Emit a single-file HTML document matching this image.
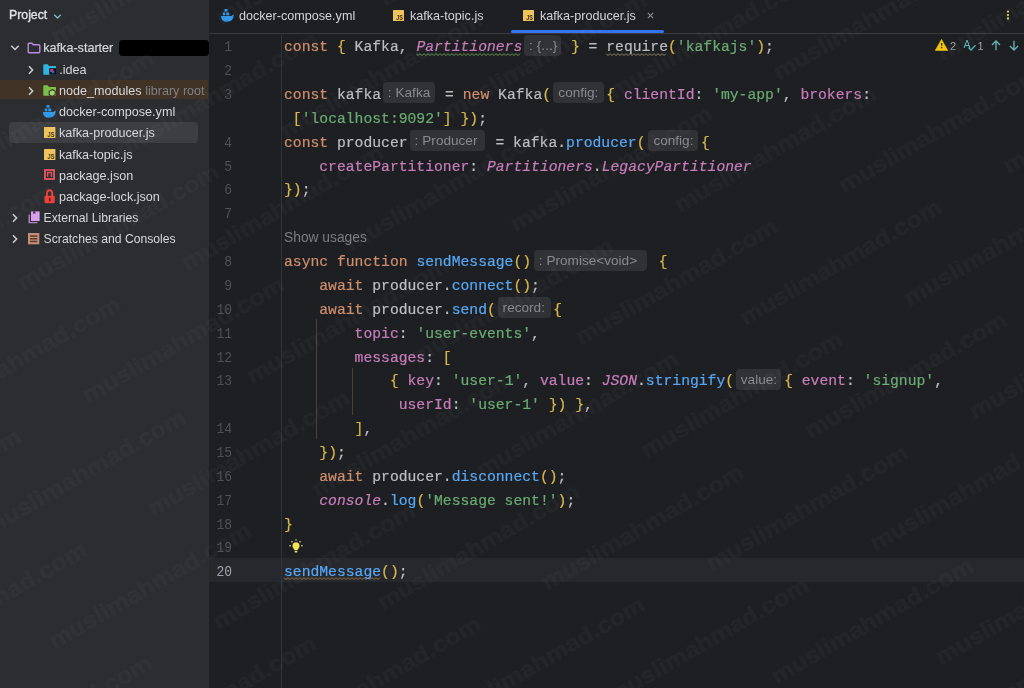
<!DOCTYPE html>
<html><head><meta charset="utf-8">
<style>
*{margin:0;padding:0;box-sizing:border-box}
html,body{width:1024px;height:688px;overflow:hidden;background:#1e1f22}
body{position:relative;font-family:"Liberation Sans",sans-serif}
#side{position:absolute;left:0;top:0;width:209px;height:688px;background:#2b2d30}
#tabs{position:absolute;left:209px;top:0;width:815px;height:34px;background:#1e1f22;border-bottom:1px solid #393b40}
.tab{position:absolute;top:0;height:32px;font-size:12.6px;color:#d2d4d9;line-height:32px;white-space:nowrap}
.uline{position:absolute;left:302px;top:30px;width:153px;height:3px;border-radius:2px;background:#3574f0}
.row{position:absolute;left:0;width:209px;height:21px;font-size:12.6px;color:#d6d8dc;line-height:21px;white-space:nowrap}
.row .t{position:absolute;top:0}
.row svg{position:absolute}
#gutline{position:absolute;left:281px;top:33px;width:1px;height:655px;background:#313438}
#curline{position:absolute;left:209px;width:815px;height:24px;background:#26282e}
.ln{position:absolute;left:209px;width:23px;text-align:right;font-family:"Liberation Mono",monospace;font-size:14.71px;color:#4e5157;height:24px;line-height:24px;padding-top:2px}
.ln.cur{color:#a1a3ab}
.cl{position:absolute;left:284px;-webkit-text-stroke:0.2px currentColor;font-family:"Liberation Mono",monospace;font-size:14.71px;color:#bcbec4;height:24px;line-height:24px;white-space:pre;padding-top:2px}
.k{color:#cf8e6d}.s{color:#6aab73}.f{color:#56a8f5}.p{color:#c77dbb}.g{color:#c77dbb;font-style:italic}.b{color:#d6b74b}
.ih{-webkit-text-stroke:0;display:inline-block;vertical-align:top;height:21px;margin-top:-0.5px;line-height:22.6px;background:#303236;border-radius:4px;color:#868a91;font-family:"Liberation Sans",sans-serif;font-size:13.6px;text-align:left;padding-left:5px;overflow:hidden}
.col{margin-right:4px}
.showu{position:absolute;left:284px;height:24px;line-height:24px;padding-top:1.7px;font-size:13.8px;color:#7a7d84;white-space:nowrap}
.sb{position:absolute;color:#dfe1e5;-webkit-text-stroke:0.35px #dfe1e5;line-height:20px}
.sb2{-webkit-text-stroke:0.2px #d6d8dc}
#wm{position:absolute;left:0;top:0;pointer-events:none}
#root{position:absolute;left:0;top:0;width:1024px;height:688px;will-change:transform}
.ln{transform:scaleX(0.88);transform-origin:right center}

</style></head><body>
<div id="root">
<div id="curline" style="top:558.34px"></div>
<div id="side">
  <div class="sb" style="left:9px;top:5.3px;font-size:12.3px">Project</div>
  <svg style="position:absolute;left:53px;top:12.5px" width="9" height="7" viewBox="0 0 9 7"><path d="M1.2 1.8 L4.5 5 L7.8 1.8" fill="none" stroke="#7fb3c8" stroke-width="1.4"/></svg>
  <div style="position:absolute;left:0;top:79.8px;width:208px;height:19.6px;background:#413325"></div>
  <div style="position:absolute;left:9px;top:122.4px;width:189px;height:20.3px;border-radius:4px;background:#3c3e42"></div>
  <!-- chevrons -->
  <svg style="position:absolute;left:10px;top:44px" width="10" height="8" viewBox="0 0 10 8"><path d="M1.3 1.8 L5 5.5 L8.7 1.8" fill="none" stroke="#ced0d6" stroke-width="1.5"/></svg>
  <svg style="position:absolute;left:27px;top:64.5px" width="8" height="10" viewBox="0 0 8 10"><path d="M2 1.3 L5.6 5 L2 8.7" fill="none" stroke="#ced0d6" stroke-width="1.5"/></svg>
  <svg style="position:absolute;left:27px;top:85.5px" width="8" height="10" viewBox="0 0 8 10"><path d="M2 1.3 L5.6 5 L2 8.7" fill="none" stroke="#ced0d6" stroke-width="1.5"/></svg>
  <svg style="position:absolute;left:11px;top:212.5px" width="8" height="10" viewBox="0 0 8 10"><path d="M2 1.3 L5.6 5 L2 8.7" fill="none" stroke="#ced0d6" stroke-width="1.5"/></svg>
  <svg style="position:absolute;left:11px;top:233.5px" width="8" height="10" viewBox="0 0 8 10"><path d="M2 1.3 L5.6 5 L2 8.7" fill="none" stroke="#ced0d6" stroke-width="1.5"/></svg>
  <!-- project folder purple outline -->
  <svg style="position:absolute;left:27px;top:42px" width="14" height="12" viewBox="0 0 14 12"><path d="M1.2 2.2 Q1.2 1.2 2.2 1.2 L5 1.2 L6.3 2.8 L11.8 2.8 Q12.8 2.8 12.8 3.8 L12.8 9.8 Q12.8 10.8 11.8 10.8 L2.2 10.8 Q1.2 10.8 1.2 9.8 Z" fill="none" stroke="#b98ee0" stroke-width="1.4"/></svg>
  <!-- .idea folder cyan -->
  <svg style="position:absolute;left:43px;top:63.5px" width="14" height="12" viewBox="0 0 14 12"><path d="M0.3 1.2 Q0.3 0.3 1.2 0.3 L4.6 0.3 L6 2 L12.3 2 Q13 2 13 2.8 L13 10 Q13 10.7 12.3 10.7 L1 10.7 Q0.3 10.7 0.3 10 Z" fill="#2fb5e0"/><rect x="6.3" y="4.2" width="6.7" height="6.5" fill="#0d0f14"/><rect x="7.3" y="5" width="3" height="3" fill="#d04080"/><rect x="9" y="6.8" width="2.5" height="2.5" fill="#3060c0"/></svg>
  <!-- node_modules green folder -->
  <svg style="position:absolute;left:43px;top:85px" width="14" height="13" viewBox="0 0 14 13"><path d="M0.3 1.2 Q0.3 0.3 1.2 0.3 L4.6 0.3 L6 2 L12.3 2 Q13 2 13 2.8 L13 10 Q13 10.7 12.3 10.7 L1 10.7 Q0.3 10.7 0.3 10 Z" fill="#7cbf4a"/><path d="M9.2 4.6 L12.2 6.3 L12.2 9.8 L9.2 11.5 L6.2 9.8 L6.2 6.3 Z" fill="#9fd672" stroke="#3a3124" stroke-width="1.1"/></svg>
  <!-- docker -->
  <svg style="position:absolute;left:43px;top:104.7px" width="14" height="13" viewBox="0 0 14 13"><rect x="3.5" y="0" width="3" height="2.6" fill="#2e98e8"/><rect x="1.8" y="3.5" width="2.5" height="2.8" fill="#2e98e8"/><rect x="5.3" y="3.5" width="2.9" height="2.8" fill="#2e98e8"/><path d="M0 7 L10.2 7 L12.9 5.2 Q12.4 12.8 6 12.8 Q0.3 12.8 0 7 Z" fill="#2e98e8"/></svg>
  <!-- js icons -->
  <svg style="position:absolute;left:43.8px;top:127px" width="12" height="11.5" viewBox="0 0 12 11.5"><rect x="0" y="0" width="11.4" height="11" rx="0.6" fill="#eec35e"/><text x="3.6" y="10" font-family="Liberation Sans" font-weight="bold" font-size="7.4" textLength="6.9" lengthAdjust="spacingAndGlyphs" fill="#3b2e12">JS</text></svg>
  <svg style="position:absolute;left:43.8px;top:148.5px" width="12" height="11.5" viewBox="0 0 12 11.5"><rect x="0" y="0" width="11.4" height="11" rx="0.6" fill="#eec35e"/><text x="3.6" y="10" font-family="Liberation Sans" font-weight="bold" font-size="7.4" textLength="6.9" lengthAdjust="spacingAndGlyphs" fill="#3b2e12">JS</text></svg>
  <!-- package.json npm -->
  <svg style="position:absolute;left:44px;top:169.3px" width="12" height="12" viewBox="0 0 12 12"><rect x="1" y="1" width="9" height="9" fill="none" stroke="#e0555f" stroke-width="1.9"/><path d="M3.6 7.8 L3.6 3.6 L7.4 3.6 L7.4 7.8" fill="none" stroke="#e0555f" stroke-width="1.5"/></svg>
  <!-- padlock -->
  <svg style="position:absolute;left:43.5px;top:188.7px" width="12" height="15" viewBox="0 0 12 15"><path d="M3 7 L3 4.6 Q3 1.2 5.6 1.2 Q8.2 1.2 8.2 4.6 L8.2 7" fill="none" stroke="#e8403a" stroke-width="1.9"/><rect x="0.5" y="6.8" width="10.3" height="7.5" rx="1.3" fill="#e8403a"/><rect x="5" y="8.8" width="1.4" height="3.4" fill="#5a1515"/></svg>
  <!-- external libraries -->
  <svg style="position:absolute;left:27.5px;top:211px" width="13" height="13" viewBox="0 0 13 13"><path d="M1.2 3.4 L1.2 11.6 L9.4 11.6" fill="none" stroke="#b982cf" stroke-width="1.4"/><rect x="3" y="0.4" width="8.6" height="9.6" fill="#d8a0ea"/><path d="M5.2 0.4 L5.2 3 L6.3 2.2 L7.4 3 L7.4 0.4 Z" fill="#3c2850"/></svg>
  <!-- scratches -->
  <svg style="position:absolute;left:28px;top:232.7px" width="12" height="12" viewBox="0 0 12 12"><rect x="0" y="0" width="11.3" height="11.3" fill="#c48f78"/><rect x="2" y="2.3" width="7.3" height="1.5" fill="#5e3a2c"/><rect x="2" y="5" width="7.3" height="1.5" fill="#5e3a2c"/><rect x="2" y="7.7" width="7.3" height="1.5" fill="#5e3a2c"/></svg>
  <div class="row" style="top:37.5px"><span class="t sb2" style="left:43.3px">kafka-starter</span></div>
  <div style="position:absolute;left:118.5px;top:40px;width:90.5px;height:15.8px;border-radius:4px;background:#000"></div>
  <div class="row" style="top:59.5px"><span class="t" style="left:59.3px">.idea</span></div>
  <div class="row" style="top:80.5px"><span class="t" style="left:59px">node_modules <span style="color:#7d8087">library root</span></span></div>
  <div class="row" style="top:102px"><span class="t" style="left:59px">docker-compose.yml</span></div>
  <div class="row" style="top:123px"><span class="t" style="left:59px">kafka-producer.js</span></div>
  <div class="row" style="top:144.5px"><span class="t" style="left:59px">kafka-topic.js</span></div>
  <div class="row" style="top:165.5px"><span class="t" style="left:59px">package.json</span></div>
  <div class="row" style="top:187px"><span class="t" style="left:59px">package-lock.json</span></div>
  <div class="row" style="top:208px"><span class="t" style="left:43.6px;font-size:12.2px">External Libraries</span></div>
  <div class="row" style="top:229px"><span class="t" style="left:43.6px;font-size:12.2px">Scratches and Consoles</span></div>
</div>
<div id="tabs">
  <svg style="position:absolute;left:11.6px;top:8.5px" width="14" height="13" viewBox="0 0 14 13"><rect x="3.5" y="0" width="3" height="2.6" fill="#2e98e8"/><rect x="1.8" y="3.5" width="2.5" height="2.8" fill="#2e98e8"/><rect x="5.3" y="3.5" width="2.9" height="2.8" fill="#2e98e8"/><path d="M0 7 L10.2 7 L12.9 5.2 Q12.4 12.8 6 12.8 Q0.3 12.8 0 7 Z" fill="#2e98e8"/></svg>
  <div class="tab" style="left:30px">docker-compose.yml</div>
  <svg style="position:absolute;left:184px;top:9.7px" width="12" height="11.5" viewBox="0 0 12 11.5"><rect x="0" y="0" width="11" height="11" rx="0.6" fill="#eec35e"/><text x="3.3" y="10" font-family="Liberation Sans" font-weight="bold" font-size="7.2" textLength="6.7" lengthAdjust="spacingAndGlyphs" fill="#3b2e12">JS</text></svg>
  <div class="tab" style="left:201px">kafka-topic.js</div>
  <svg style="position:absolute;left:313.8px;top:9.7px" width="12" height="11.5" viewBox="0 0 12 11.5"><rect x="0" y="0" width="11" height="11" rx="0.6" fill="#eec35e"/><text x="3.3" y="10" font-family="Liberation Sans" font-weight="bold" font-size="7.2" textLength="6.7" lengthAdjust="spacingAndGlyphs" fill="#3b2e12">JS</text></svg>
  <div class="tab" style="left:331px">kafka-producer.js</div>
  <svg style="position:absolute;left:437.5px;top:11.5px" width="7" height="7" viewBox="0 0 7 7"><path d="M0.8 0.8 L6.2 6.2 M6.2 0.8 L0.8 6.2" stroke="#8c8f96" stroke-width="1.1"/></svg>
  <div class="uline"></div>
  <svg style="position:absolute;left:796px;top:9px" width="6" height="12" viewBox="0 0 6 12"><circle cx="3" cy="2.55" r="1.15" fill="#d6cf5a"/><circle cx="3" cy="6.05" r="1.15" fill="#d6cf5a"/><circle cx="3" cy="9.5" r="1.15" fill="#d6cf5a"/></svg>
</div>
<!-- problems widget -->
<svg style="position:absolute;left:935px;top:39px" width="14" height="12" viewBox="0 0 14 12"><path d="M6.5 0.4 L12.8 11.6 L0.2 11.6 Z" fill="#f2c40f" stroke="#f2c40f" stroke-width="0.6" stroke-linejoin="round"/><rect x="5.9" y="4" width="1.4" height="2.6" fill="#3a3000"/><rect x="5.9" y="7.8" width="1.4" height="1.5" fill="#3a3000"/></svg>
<div style="position:absolute;left:950px;top:38px;font-size:11px;line-height:16px;color:#9da0a8">2</div>
<svg style="position:absolute;left:963px;top:39px" width="14" height="13" viewBox="0 0 14 13"><text x="0.5" y="8.6" font-family="Liberation Sans" font-size="10.5" fill="#5bb5bb">A</text><path d="M5.5 8.4 L8 11 L12.5 6.3" fill="none" stroke="#4fb0b0" stroke-width="1.4"/></svg>
<div style="position:absolute;left:977.5px;top:38px;font-size:11px;line-height:16px;color:#9da0a8">1</div>
<svg style="position:absolute;left:990.5px;top:39.5px" width="10" height="11" viewBox="0 0 10 11"><path d="M5 10.3 L5 1.2 M1 5 L5 1 L9 5" fill="none" stroke="#6ab5b2" stroke-width="1.3"/></svg>
<svg style="position:absolute;left:1009px;top:39.5px" width="10" height="11" viewBox="0 0 10 11"><path d="M5 0.7 L5 9.8 M1 6 L5 10 L9 6" fill="none" stroke="#6ab5b2" stroke-width="1.3"/></svg>
<!-- indent guides -->
<div style="position:absolute;left:316px;top:319px;width:1px;height:120px;background:#4a4330"></div>
<div style="position:absolute;left:352px;top:368px;width:1px;height:47px;background:#4a4330"></div>
<!-- bulb -->
<svg style="position:absolute;left:288.5px;top:538.5px" width="15" height="15" viewBox="0 0 15 15"><circle cx="7" cy="6.8" r="3.5" fill="#f4e258"/><path d="M4.6 8.8 L9.4 8.8 L8.6 11.3 L5.4 11.3 Z" fill="#f4e258"/><rect x="5.6" y="12" width="2.8" height="1.5" rx="0.5" fill="#e8dc8a"/><g fill="#d2cc9a"><rect x="6.3" y="0.3" width="1.4" height="1.4"/><rect x="2.3" y="2" width="1.4" height="1.4"/><rect x="10.3" y="2" width="1.4" height="1.4"/><rect x="0.4" y="6" width="1.4" height="1.4"/><rect x="12.2" y="6" width="1.4" height="1.4"/></g></svg>
<!-- wavy -->
<svg style="position:absolute;left:416px;top:52.6px" width="107" height="4"><polyline points="0.0,0.6 2.0,2.6 4.0,0.6 6.0,2.6 8.0,0.6 10.0,2.6 12.0,0.6 14.0,2.6 16.0,0.6 18.0,2.6 20.0,0.6 22.0,2.6 24.0,0.6 26.0,2.6 28.0,0.6 30.0,2.6 32.0,0.6 34.0,2.6 36.0,0.6 38.0,2.6 40.0,0.6 42.0,2.6 44.0,0.6 46.0,2.6 48.0,0.6 50.0,2.6 52.0,0.6 54.0,2.6 56.0,0.6 58.0,2.6 60.0,0.6 62.0,2.6 64.0,0.6 66.0,2.6 68.0,0.6 70.0,2.6 72.0,0.6 74.0,2.6 76.0,0.6 78.0,2.6 80.0,0.6 82.0,2.6 84.0,0.6 86.0,2.6 88.0,0.6 90.0,2.6 92.0,0.6 94.0,2.6 96.0,0.6 98.0,2.6 100.0,0.6 102.0,2.6 104.0,0.6" fill="none" stroke="#6a9a52" stroke-width="1"/></svg>
<svg style="position:absolute;left:606px;top:52.6px" width="63" height="4"><polyline points="0.0,0.6 2.0,2.6 4.0,0.6 6.0,2.6 8.0,0.6 10.0,2.6 12.0,0.6 14.0,2.6 16.0,0.6 18.0,2.6 20.0,0.6 22.0,2.6 24.0,0.6 26.0,2.6 28.0,0.6 30.0,2.6 32.0,0.6 34.0,2.6 36.0,0.6 38.0,2.6 40.0,0.6 42.0,2.6 44.0,0.6 46.0,2.6 48.0,0.6 50.0,2.6 52.0,0.6 54.0,2.6 56.0,0.6 58.0,2.6 60.0,0.6" fill="none" stroke="#948462" stroke-width="1"/></svg>
<svg style="position:absolute;left:284px;top:576.8px" width="98" height="4"><polyline points="0.0,0.6 2.0,2.6 4.0,0.6 6.0,2.6 8.0,0.6 10.0,2.6 12.0,0.6 14.0,2.6 16.0,0.6 18.0,2.6 20.0,0.6 22.0,2.6 24.0,0.6 26.0,2.6 28.0,0.6 30.0,2.6 32.0,0.6 34.0,2.6 36.0,0.6 38.0,2.6 40.0,0.6 42.0,2.6 44.0,0.6 46.0,2.6 48.0,0.6 50.0,2.6 52.0,0.6 54.0,2.6 56.0,0.6 58.0,2.6 60.0,0.6 62.0,2.6 64.0,0.6 66.0,2.6 68.0,0.6 70.0,2.6 72.0,0.6 74.0,2.6 76.0,0.6 78.0,2.6 80.0,0.6 82.0,2.6 84.0,0.6 86.0,2.6 88.0,0.6 90.0,2.6 92.0,0.6 94.0,2.6 96.0,0.6" fill="none" stroke="#977348" stroke-width="1"/></svg>

<div id="gutline"></div>
<div class="ln" style="top:33.20px">1</div><div class="ln" style="top:57.07px">2</div><div class="ln" style="top:80.94px">3</div><div class="ln" style="top:128.68px">4</div><div class="ln" style="top:152.55px">5</div><div class="ln" style="top:176.42px">6</div><div class="ln" style="top:200.29px">7</div><div class="ln" style="top:248.03px">8</div><div class="ln" style="top:271.90px">9</div><div class="ln" style="top:295.77px">10</div><div class="ln" style="top:319.64px">11</div><div class="ln" style="top:343.51px">12</div><div class="ln" style="top:367.38px">13</div><div class="ln" style="top:415.12px">14</div><div class="ln" style="top:438.99px">15</div><div class="ln" style="top:462.86px">16</div><div class="ln" style="top:486.73px">17</div><div class="ln" style="top:510.60px">18</div><div class="ln" style="top:534.47px">19</div><div class="ln cur" style="top:558.34px">20</div>
<div id="code">
<div class="cl" style="top:33.20px"><span class="k">const</span> <span class="b">{</span> Kafka, <span class="g">Partitioners</span><span class="ih" style="width:36.50px;margin-left:1.77px;margin-right:1.60px"><span class="col">:</span>{...}</span> <span class="b">}</span> = require<span class="b">(</span><span class="s">'kafkajs'</span><span class="b">)</span>;</div>
<div class="cl" style="top:80.94px"><span class="k">const</span> kafka<span class="ih" style="width:51.80px;margin-left:1.64px;margin-right:1.80px"><span class="col">:</span>Kafka</span> = <span class="k">new</span> Kafka<span class="b">(</span><span class="ih" style="width:50.70px;margin-left:2.30px;margin-right:2.20px">config:</span><span class="b">{</span> <span class="p">clientId</span>: <span class="s">'my-app'</span>, <span class="p">brokers</span>:</div>
<div class="cl" style="top:104.81px"> <span class="b">[</span><span class="s">'localhost:9092'</span><span class="b">]</span> <span class="b">}</span><span class="b">)</span>;</div>
<div class="cl" style="top:128.68px"><span class="k">const</span> producer<span class="ih" style="width:75.20px;margin-left:1.97px;margin-right:1.95px"><span class="col">:</span>Producer</span> = kafka.<span class="f">producer</span><span class="b">(</span><span class="ih" style="width:49.80px;margin-left:2.93px;margin-right:2.90px">config:</span><span class="b">{</span></div>
<div class="cl" style="top:152.55px">    <span class="p">createPartitioner</span>: <span class="g">Partitioners</span>.<span class="g">LegacyPartitioner</span></div>
<div class="cl" style="top:176.42px"><span class="b">}</span><span class="b">)</span>;</div>
<div class="cl" style="top:248.03px"><span class="k">async</span> <span class="k">function</span> <span class="f">sendMessage</span><span class="b">()</span><span class="ih" style="width:112.90px;margin-left:2.54px;margin-right:3.30px"><span class="col">:</span>Promise&lt;void&gt;</span> <span class="b">{</span></div>
<div class="cl" style="top:271.90px">    <span class="k">await</span> producer.<span class="f">connect</span><span class="b">()</span>;</div>
<div class="cl" style="top:295.77px">    <span class="k">await</span> producer.<span class="f">send</span><span class="b">(</span><span class="ih" style="width:53.40px;margin-left:1.84px;margin-right:2.25px">record:</span><span class="b">{</span></div>
<div class="cl" style="top:319.64px">        <span class="p">topic</span>: <span class="s">'user-events'</span>,</div>
<div class="cl" style="top:343.51px">        <span class="p">messages</span>: <span class="b">[</span></div>
<div class="cl" style="top:367.38px">            <span class="b">{</span> <span class="p">key</span>: <span class="s">'user-1'</span>, <span class="p">value</span>: <span class="g">JSON</span>.<span class="f">stringify</span><span class="b">(</span><span class="ih" style="width:45.30px;margin-left:1.70px;margin-right:3.05px">value:</span><span class="b">{</span> <span class="p">event</span>: <span class="s">'signup'</span>,</div>
<div class="cl" style="top:391.25px">             <span class="p">userId</span>: <span class="s">'user-1'</span> <span class="b">}</span><span class="b">)</span> <span class="b">}</span>,</div>
<div class="cl" style="top:415.12px">        <span class="b">]</span>,</div>
<div class="cl" style="top:438.99px">    <span class="b">}</span><span class="b">)</span>;</div>
<div class="cl" style="top:462.86px">    <span class="k">await</span> producer.<span class="f">disconnect</span><span class="b">()</span>;</div>
<div class="cl" style="top:486.73px">    <span class="g">console</span>.<span class="f">log</span><span class="b">(</span><span class="s">'Message sent!'</span><span class="b">)</span>;</div>
<div class="cl" style="top:510.60px"><span class="b">}</span></div>
<div class="cl" style="top:558.34px"><span class="f">sendMessage</span><span class="b">()</span>;</div>
</div>
<div class="showu" style="top:224.16px">Show usages</div>
<svg id="wm" width="1024" height="688" viewBox="0 0 1024 688"><g opacity="0.028" font-family="Liberation Sans" font-weight="bold" font-size="23" fill="#ffffff" stroke="#ffffff" stroke-width="0.4"><text x="-206.8" y="197.1" transform="rotate(-30 -206.8 197.1)" textLength="229" lengthAdjust="spacingAndGlyphs">muslimahmad.com</text><text x="56.4" y="45.1" transform="rotate(-30 56.4 45.1)" textLength="229" lengthAdjust="spacingAndGlyphs">muslimahmad.com</text><text x="-42.6" y="177.6" transform="rotate(-30 -42.6 177.6)" textLength="229" lengthAdjust="spacingAndGlyphs">muslimahmad.com</text><text x="220.7" y="25.6" transform="rotate(-30 220.7 25.6)" textLength="229" lengthAdjust="spacingAndGlyphs">muslimahmad.com</text><text x="-141.5" y="310.2" transform="rotate(-30 -141.5 310.2)" textLength="229" lengthAdjust="spacingAndGlyphs">muslimahmad.com</text><text x="121.7" y="158.2" transform="rotate(-30 121.7 158.2)" textLength="229" lengthAdjust="spacingAndGlyphs">muslimahmad.com</text><text x="385.0" y="6.2" transform="rotate(-30 385.0 6.2)" textLength="229" lengthAdjust="spacingAndGlyphs">muslimahmad.com</text><text x="22.7" y="290.7" transform="rotate(-30 22.7 290.7)" textLength="229" lengthAdjust="spacingAndGlyphs">muslimahmad.com</text><text x="286.0" y="138.7" transform="rotate(-30 286.0 138.7)" textLength="229" lengthAdjust="spacingAndGlyphs">muslimahmad.com</text><text x="549.3" y="-13.3" transform="rotate(-30 549.3 -13.3)" textLength="229" lengthAdjust="spacingAndGlyphs">muslimahmad.com</text><text x="-76.2" y="423.3" transform="rotate(-30 -76.2 423.3)" textLength="229" lengthAdjust="spacingAndGlyphs">muslimahmad.com</text><text x="187.0" y="271.3" transform="rotate(-30 187.0 271.3)" textLength="229" lengthAdjust="spacingAndGlyphs">muslimahmad.com</text><text x="450.3" y="119.3" transform="rotate(-30 450.3 119.3)" textLength="229" lengthAdjust="spacingAndGlyphs">muslimahmad.com</text><text x="-175.2" y="555.8" transform="rotate(-30 -175.2 555.8)" textLength="229" lengthAdjust="spacingAndGlyphs">muslimahmad.com</text><text x="88.0" y="403.8" transform="rotate(-30 88.0 403.8)" textLength="229" lengthAdjust="spacingAndGlyphs">muslimahmad.com</text><text x="351.3" y="251.8" transform="rotate(-30 351.3 251.8)" textLength="229" lengthAdjust="spacingAndGlyphs">muslimahmad.com</text><text x="614.6" y="99.8" transform="rotate(-30 614.6 99.8)" textLength="229" lengthAdjust="spacingAndGlyphs">muslimahmad.com</text><text x="-10.9" y="536.4" transform="rotate(-30 -10.9 536.4)" textLength="229" lengthAdjust="spacingAndGlyphs">muslimahmad.com</text><text x="252.3" y="384.4" transform="rotate(-30 252.3 384.4)" textLength="229" lengthAdjust="spacingAndGlyphs">muslimahmad.com</text><text x="515.6" y="232.4" transform="rotate(-30 515.6 232.4)" textLength="229" lengthAdjust="spacingAndGlyphs">muslimahmad.com</text><text x="778.9" y="80.4" transform="rotate(-30 778.9 80.4)" textLength="229" lengthAdjust="spacingAndGlyphs">muslimahmad.com</text><text x="-109.9" y="668.9" transform="rotate(-30 -109.9 668.9)" textLength="229" lengthAdjust="spacingAndGlyphs">muslimahmad.com</text><text x="153.3" y="516.9" transform="rotate(-30 153.3 516.9)" textLength="229" lengthAdjust="spacingAndGlyphs">muslimahmad.com</text><text x="416.6" y="364.9" transform="rotate(-30 416.6 364.9)" textLength="229" lengthAdjust="spacingAndGlyphs">muslimahmad.com</text><text x="679.9" y="212.9" transform="rotate(-30 679.9 212.9)" textLength="229" lengthAdjust="spacingAndGlyphs">muslimahmad.com</text><text x="943.2" y="60.9" transform="rotate(-30 943.2 60.9)" textLength="229" lengthAdjust="spacingAndGlyphs">muslimahmad.com</text><text x="-208.9" y="801.5" transform="rotate(-30 -208.9 801.5)" textLength="229" lengthAdjust="spacingAndGlyphs">muslimahmad.com</text><text x="54.4" y="649.5" transform="rotate(-30 54.4 649.5)" textLength="229" lengthAdjust="spacingAndGlyphs">muslimahmad.com</text><text x="317.6" y="497.5" transform="rotate(-30 317.6 497.5)" textLength="229" lengthAdjust="spacingAndGlyphs">muslimahmad.com</text><text x="580.9" y="345.5" transform="rotate(-30 580.9 345.5)" textLength="229" lengthAdjust="spacingAndGlyphs">muslimahmad.com</text><text x="844.2" y="193.5" transform="rotate(-30 844.2 193.5)" textLength="229" lengthAdjust="spacingAndGlyphs">muslimahmad.com</text><text x="-44.6" y="782.0" transform="rotate(-30 -44.6 782.0)" textLength="229" lengthAdjust="spacingAndGlyphs">muslimahmad.com</text><text x="218.6" y="630.0" transform="rotate(-30 218.6 630.0)" textLength="229" lengthAdjust="spacingAndGlyphs">muslimahmad.com</text><text x="481.9" y="478.0" transform="rotate(-30 481.9 478.0)" textLength="229" lengthAdjust="spacingAndGlyphs">muslimahmad.com</text><text x="745.2" y="326.0" transform="rotate(-30 745.2 326.0)" textLength="229" lengthAdjust="spacingAndGlyphs">muslimahmad.com</text><text x="1008.5" y="174.0" transform="rotate(-30 1008.5 174.0)" textLength="229" lengthAdjust="spacingAndGlyphs">muslimahmad.com</text><text x="119.7" y="762.6" transform="rotate(-30 119.7 762.6)" textLength="229" lengthAdjust="spacingAndGlyphs">muslimahmad.com</text><text x="382.9" y="610.6" transform="rotate(-30 382.9 610.6)" textLength="229" lengthAdjust="spacingAndGlyphs">muslimahmad.com</text><text x="646.2" y="458.6" transform="rotate(-30 646.2 458.6)" textLength="229" lengthAdjust="spacingAndGlyphs">muslimahmad.com</text><text x="909.5" y="306.6" transform="rotate(-30 909.5 306.6)" textLength="229" lengthAdjust="spacingAndGlyphs">muslimahmad.com</text><text x="283.9" y="743.1" transform="rotate(-30 283.9 743.1)" textLength="229" lengthAdjust="spacingAndGlyphs">muslimahmad.com</text><text x="547.2" y="591.1" transform="rotate(-30 547.2 591.1)" textLength="229" lengthAdjust="spacingAndGlyphs">muslimahmad.com</text><text x="810.5" y="439.1" transform="rotate(-30 810.5 439.1)" textLength="229" lengthAdjust="spacingAndGlyphs">muslimahmad.com</text><text x="448.2" y="723.7" transform="rotate(-30 448.2 723.7)" textLength="229" lengthAdjust="spacingAndGlyphs">muslimahmad.com</text><text x="711.5" y="571.7" transform="rotate(-30 711.5 571.7)" textLength="229" lengthAdjust="spacingAndGlyphs">muslimahmad.com</text><text x="974.8" y="419.7" transform="rotate(-30 974.8 419.7)" textLength="229" lengthAdjust="spacingAndGlyphs">muslimahmad.com</text><text x="612.5" y="704.2" transform="rotate(-30 612.5 704.2)" textLength="229" lengthAdjust="spacingAndGlyphs">muslimahmad.com</text><text x="875.8" y="552.2" transform="rotate(-30 875.8 552.2)" textLength="229" lengthAdjust="spacingAndGlyphs">muslimahmad.com</text><text x="776.8" y="684.8" transform="rotate(-30 776.8 684.8)" textLength="229" lengthAdjust="spacingAndGlyphs">muslimahmad.com</text><text x="1040.1" y="532.8" transform="rotate(-30 1040.1 532.8)" textLength="229" lengthAdjust="spacingAndGlyphs">muslimahmad.com</text><text x="677.8" y="817.4" transform="rotate(-30 677.8 817.4)" textLength="229" lengthAdjust="spacingAndGlyphs">muslimahmad.com</text><text x="941.1" y="665.4" transform="rotate(-30 941.1 665.4)" textLength="229" lengthAdjust="spacingAndGlyphs">muslimahmad.com</text><text x="842.1" y="797.9" transform="rotate(-30 842.1 797.9)" textLength="229" lengthAdjust="spacingAndGlyphs">muslimahmad.com</text><text x="1006.4" y="778.5" transform="rotate(-30 1006.4 778.5)" textLength="229" lengthAdjust="spacingAndGlyphs">muslimahmad.com</text></g></svg>
</div>
</body></html>
